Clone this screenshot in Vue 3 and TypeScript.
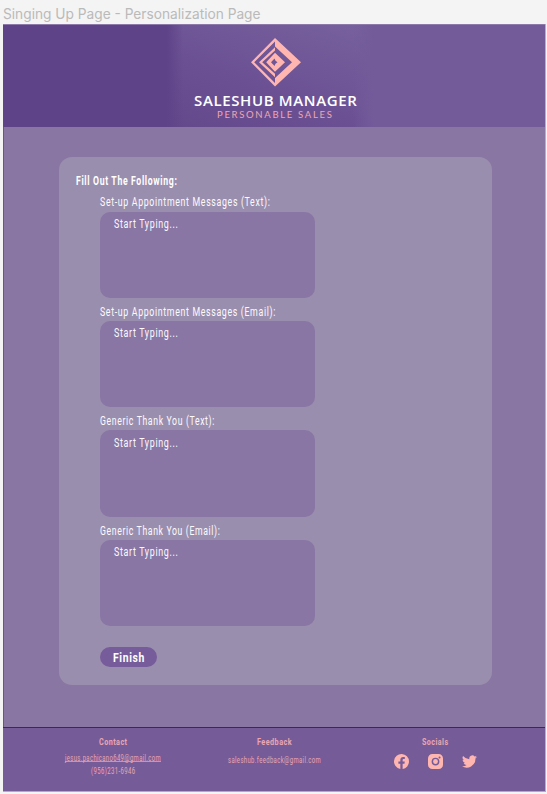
<script setup lang="ts">
import { defineComponent, h } from 'vue'

// Single line of text condensed to an exact width, baseline 12px below its top.
const FitText = defineComponent({
  props: {
    text: { type: String, required: true },
    w: { type: Number, required: true },
  },
  setup(props) {
    return () =>
      h('svg', { class: 'fit', width: props.w, height: 16, role: 'img', 'aria-label': props.text }, [
        h('text', { x: 0, y: 12, textLength: props.w, lengthAdjust: 'spacingAndGlyphs' }, props.text),
      ])
  },
})

interface Field { label: string; width: number }
const fields: Field[] = [
  { label: 'Set-up Appointment Messages (Text):', width: 170.5 },
  { label: 'Set-up Appointment Messages (Email):', width: 176 },
  { label: 'Generic Thank You (Text):', width: 115 },
  { label: 'Generic Thank You (Email):', width: 120.5 },
]
</script>

<template>
  <div class="page">
    <div class="frame-title"><FitText text="Singing Up Page - Personalization Page" :w="257.5" /></div>
    <main class="board">
      <header class="header">
        <div class="brand">
          <svg class="mark" width="50" height="49" viewBox="0 0 50 49">
            <path d="M24 0L0 24.2 24 48.5V45L3.2 24.2 24 3.5Z" />
            <path d="M24 0L50 24.2 24 48.5V40L41 24.2 24 8.5Z" />
            <path d="M24 9.2L8 24.2 24 39.2V35.8L11.2 24.2 24 12.6Z" />
            <path fill-rule="evenodd" d="M24 14.7L15.2 24.2 24 33.7 34 24.2ZM23.500 20.500L24.500 22.700 26.500 24.200 24.500 25.700 23.500 27.900 20 24.200Z" />
          </svg>
          <FitText class="name" text="SALESHUB MANAGER" :w="163.5" />
          <FitText class="tagline" text="PERSONABLE SALES" :w="116.5" />
        </div>
      </header>
      <section class="content">
        <div class="card">
          <FitText class="heading" text="Fill Out The Following:" :w="101.5" />
          <div class="fields">
            <div v-for="field in fields" :key="field.label" class="field">
              <FitText :text="field.label" :w="field.width" />
              <div class="box"><FitText text="Start Typing..." :w="64.5" /></div>
            </div>
            <button class="finish"><FitText text="Finish" :w="32" /></button>
          </div>
        </div>
      </section>
      <footer class="footer">
        <div class="col contact">
          <FitText class="title" text="Contact" :w="28.5" />
          <a class="mail"><FitText text="jesus.pachicano649@gmail.com" :w="96" /></a>
          <FitText class="phone" text="(956)231-6946" :w="44.5" />
        </div>
        <div class="col feedback">
          <FitText class="title" text="Feedback" :w="35" />
          <FitText class="support" text="saleshub.feedback@gmail.com" :w="93" />
        </div>
        <div class="col socials">
          <FitText class="title" text="Socials" :w="26.5" />
          <div class="icons">
            <svg width="15" height="15" viewBox="0 0 24 24"><path d="M24 12A12 12 0 1 0 10.1 23.9V15.5H7V12h3.100V9.400c0-3 1.800-4.700 4.500-4.700 1.300 0 2.700.2 2.700.2v3h-1.500c-1.500 0-2 .9-2 1.900V12h3.400l-.5 3.500h-2.900v8.400A12 12 0 0 0 24 12Z" /></svg>
            <svg width="15" height="15" viewBox="0 0 24 24"><path fill-rule="evenodd" d="M7 0h10a7 7 0 0 1 7 7v10a7 7 0 0 1-7 7H7a7 7 0 0 1-7-7V7a7 7 0 0 1 7-7Zm5 5.800a6.200 6.200 0 1 0 0 12.400 6.200 6.200 0 0 0 0-12.400Zm0 2.300a3.900 3.900 0 1 1 0 7.800 3.900 3.900 0 0 1 0-7.800ZM18.500 4a1.600 1.600 0 1 0 0 3.200 1.600 1.600 0 0 0 0-3.200Z" /></svg>
            <svg width="15" height="15" viewBox="0 0 24 24"><path d="M24 4.600a10 10 0 0 1-2.800.8 5 5 0 0 0 2.100-2.700 10 10 0 0 1-3.100 1.200A4.900 4.900 0 0 0 11.800 8.400 14 14 0 0 1 1.700 3.200a4.900 4.900 0 0 0 1.500 6.600 5 5 0 0 1-2.200-.6c0 2.300 1.600 4.400 3.900 4.900a5 5 0 0 1-2.200.1 4.900 4.900 0 0 0 4.600 3.400A9.900 9.900 0 0 1 0 19.500a14 14 0 0 0 21.500-12.400A10 10 0 0 0 24 4.600Z" /></svg>
          </div>
        </div>
      </footer>
    </main>
  </div>
</template>

<style>
body { background: #f4f4f4; }
.fit { display: block; flex: none; overflow: visible; fill: currentColor; }
</style>

<style scoped>
.page { box-sizing: border-box; width: 547px; height: 794px; padding: 7px 1px 2px 3px; overflow: hidden; background: #f4f4f4; font-family: Roboto, "Liberation Sans", sans-serif; color: #fff; }
.frame-title { height: 17px; font: 14px Inter, sans-serif; color: #bababa; }
.board { box-sizing: border-box; display: flex; flex-direction: column; width: 543px; height: 768px; border-right: 1px solid #b9adc7; border-bottom: 1px solid #b5a7c8; }
.header { box-sizing: border-box; height: 103px; border-top: 1px solid #8d7aab; background: linear-gradient(90deg, #5f4389 0 164px, transparent 180px 350px, #735b9a 370px), linear-gradient(20deg, #624789 15%, #6b5194 45%, #7a649f 85%); }
.brand { display: flex; flex-direction: column; align-items: center; width: 164px; padding: 13px 0 0 190.500px; }
.mark { fill: #ffb5b0; }
.name { margin-top: 7px; font: 600 14px "Open Sans", sans-serif; letter-spacing: .6px; }
.tagline { margin-top: -4px; font: 8.500px Lato, sans-serif; letter-spacing: 1.500px; color: #eea8b0; }
.content { box-sizing: border-box; height: 600px; padding: 30px 0 0 55px; border-left: 1px solid #66577d; background: #8976a2; }
.card { box-sizing: border-box; width: 433px; height: 528px; padding: 16px 17px; border-radius: 13px; background: #9a8eae; font-size: 12px; letter-spacing: .9px; }
.heading { font-weight: 700; }
.fields { display: flex; flex-direction: column; gap: 7px; padding: 5.400px 0 0 24.400px; }
.field { height: 102.400px; color: #fcfafd; }
.box { box-sizing: border-box; width: 214.600px; height: 86.500px; margin-top: 1.200px; padding: 4.500px 13.600px; border-radius: 10px; background: #8976a5; }
.finish { display: flex; justify-content: center; box-sizing: border-box; width: 57px; height: 20px; margin-top: 15px; padding: 3px 0 0; border: 0; border-radius: 10px; background: #765c9a; color: #fff; font: 700 13px Roboto, sans-serif; letter-spacing: .8px; }
.footer { box-sizing: border-box; display: flex; flex: 1; border-top: 1px solid #3b2b49; background: #755c99; color: #eba6af; letter-spacing: .6px; }
.col { display: flex; flex-direction: column; align-items: center; padding-top: 5px; }
.contact { width: 220px; }
.feedback { width: 102px; }
.socials { width: 220px; }
.title { font-weight: 700; font-size: 9.500px; }
.mail { display: block; height: 12px; border-bottom: 1px solid #cc94ab; font-size: 9px; }
.phone { font-size: 8.500px; }
.support { margin-top: 1.500px; font-size: 9px; }
.icons { display: flex; gap: 19px; margin-top: 5px; fill: #ffb5b0; }
</style>
